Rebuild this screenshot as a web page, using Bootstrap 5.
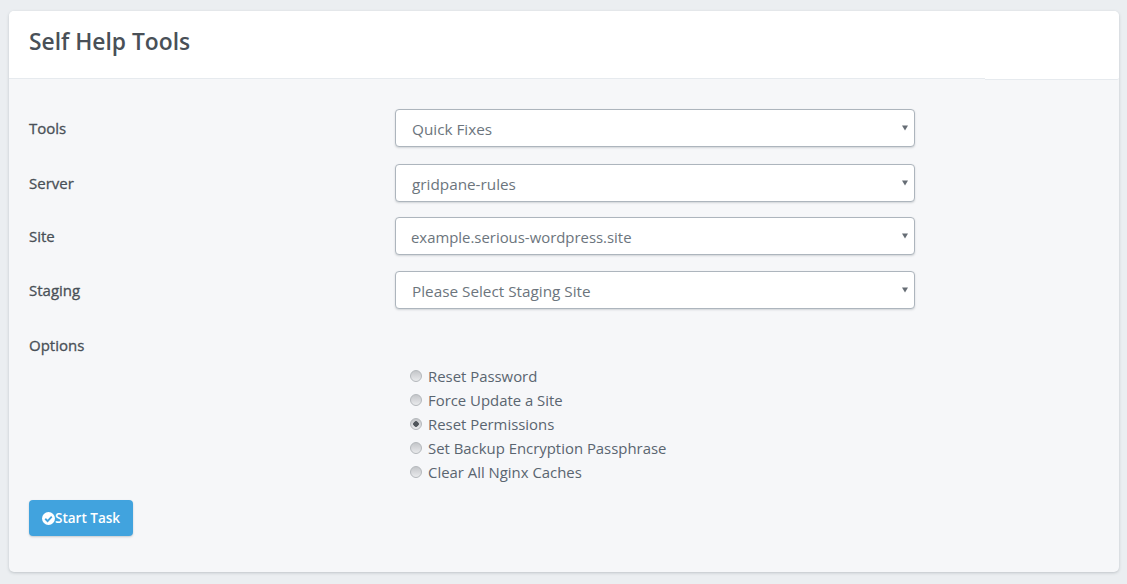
<!DOCTYPE html>
<html lang="en">
<head>
<meta charset="utf-8">
<title>Self Help Tools</title>
<link href="https://cdn.jsdelivr.net/npm/bootstrap@5.3.0/dist/css/bootstrap.min.css" rel="stylesheet">
<style>
html,body{height:100%}
body{background:#ebeef1;font-family:"Open Sans","Noto Sans",sans-serif;color:#495057;padding:11px 8px 12px 9px;overflow:hidden}
.tool-card{height:561px;background:#f6f7f9;border:0;border-radius:5px;box-shadow:0 1px 3px rgba(60,70,80,.25)}
.tool-head{position:relative;height:68px;background:#fff;border-bottom:1px solid #e6eaee;border-radius:5px 5px 0 0;padding:0 20px;display:flex;align-items:center}
.tool-head::after{content:"";position:absolute;right:0;bottom:-2px;width:134px;height:2px;background:#fff;border-bottom:1px solid #e6eaee;border-radius:0 0 4px 0}
.tool-title{font-size:22.8px;font-weight:600;color:#495057;margin:0 0 6px}
.tool-body{padding:30px 20px 0}
.tool-row{display:flex;align-items:center;height:38px}
.tool-row.gap-a{margin-bottom:17px}
.tool-row.gap-b{margin-bottom:15px}
.tool-row.gap-c{margin-bottom:16px}
.tool-label{width:366px;flex:none;margin:0 0 0;font-size:15px;font-weight:400;-webkit-text-stroke:.3px #495057;color:#495057}
.tool-select{width:520px;height:38px;padding:2px 30px 0 16px;font-size:15.3px;color:#6c757d;background-color:#fff;border:1px solid #adb5bd;border-radius:4px;box-shadow:0 1px 2px rgba(60,70,80,.2);background-size:6px 6px;background-position:right 6px center;background-image:url("data:image/svg+xml,%3Csvg xmlns='http://www.w3.org/2000/svg' viewBox='0 0 7 6'%3E%3Cpath fill='%23666d75' d='M0 0h7L3.500 6z'/%3E%3C/svg%3E")}
.site-select{padding-left:15px;font-size:14.9px}
.opt-head{margin:26px 0 0;height:20px;line-height:20px}
.opt-list{margin:9px 0 0 381px;line-height:24px}
.opt-item{display:flex;align-items:center;height:24px;margin:0;font-size:14.9px;color:#5a6570}
.opt-radio{appearance:none;-webkit-appearance:none;width:12px;height:12px;margin:0 6px 1px 0;flex:none;border-radius:50%;border:1px solid #b4b8bc;background:linear-gradient(180deg,#c4c6c9,#e9eaec)}
.opt-radio:checked{background:radial-gradient(circle,#50565c 0 2.500px,transparent 3px),linear-gradient(180deg,#c4c6c9,#e9eaec)}
.go-btn{margin-top:16px;width:104px;height:36px;padding:1px 0 0;display:flex;align-items:center;justify-content:center;background:#41a3de;border:0;border-radius:4px;color:#fff;font-size:13.500px;font-weight:600;box-shadow:0 1px 2px rgba(60,70,80,.25)}
.go-btn:hover{background:#41a3de;color:#fff}
.go-btn svg{width:13px;height:13px;flex:none}
</style>
</head>
<body>
<div class="card tool-card">
  <div class="tool-head"><h1 class="tool-title">Self Help Tools</h1></div>
  <form class="tool-body">
    <div class="tool-row gap-a">
      <label class="tool-label" for="s1">Tools</label>
      <select class="form-select tool-select" id="s1"><option>Quick Fixes</option></select>
    </div>
    <div class="tool-row gap-b">
      <label class="tool-label" for="s2">Server</label>
      <select class="form-select tool-select" id="s2"><option>gridpane-rules</option></select>
    </div>
    <div class="tool-row gap-c">
      <label class="tool-label" for="s3">Site</label>
      <select class="form-select tool-select site-select" id="s3"><option>example.serious-wordpress.site</option></select>
    </div>
    <div class="tool-row">
      <label class="tool-label" for="s4">Staging</label>
      <select class="form-select tool-select" id="s4"><option>Please Select Staging Site</option></select>
    </div>
    <div class="tool-label opt-head">Options</div>
    <div class="opt-list">
      <label class="opt-item"><input class="opt-radio" type="radio" name="opt">Reset Password</label>
      <label class="opt-item"><input class="opt-radio" type="radio" name="opt">Force Update a Site</label>
      <label class="opt-item"><input class="opt-radio" type="radio" name="opt" checked>Reset Permissions</label>
      <label class="opt-item"><input class="opt-radio" type="radio" name="opt">Set Backup Encryption Passphrase</label>
      <label class="opt-item"><input class="opt-radio" type="radio" name="opt">Clear All Nginx Caches</label>
    </div>
    <button type="button" class="btn go-btn"><svg viewBox="0 0 14 14"><circle cx="7" cy="7" r="7" fill="#fff"/><path d="M3.500 7.300l2.500 2.500 4.500-4.800" fill="none" stroke="#41a3de" stroke-width="2"/></svg>Start Task</button>
  </form>
</div>
<script src="https://cdn.jsdelivr.net/npm/bootstrap@5.3.0/dist/js/bootstrap.bundle.min.js"></script>
</body>
</html>
